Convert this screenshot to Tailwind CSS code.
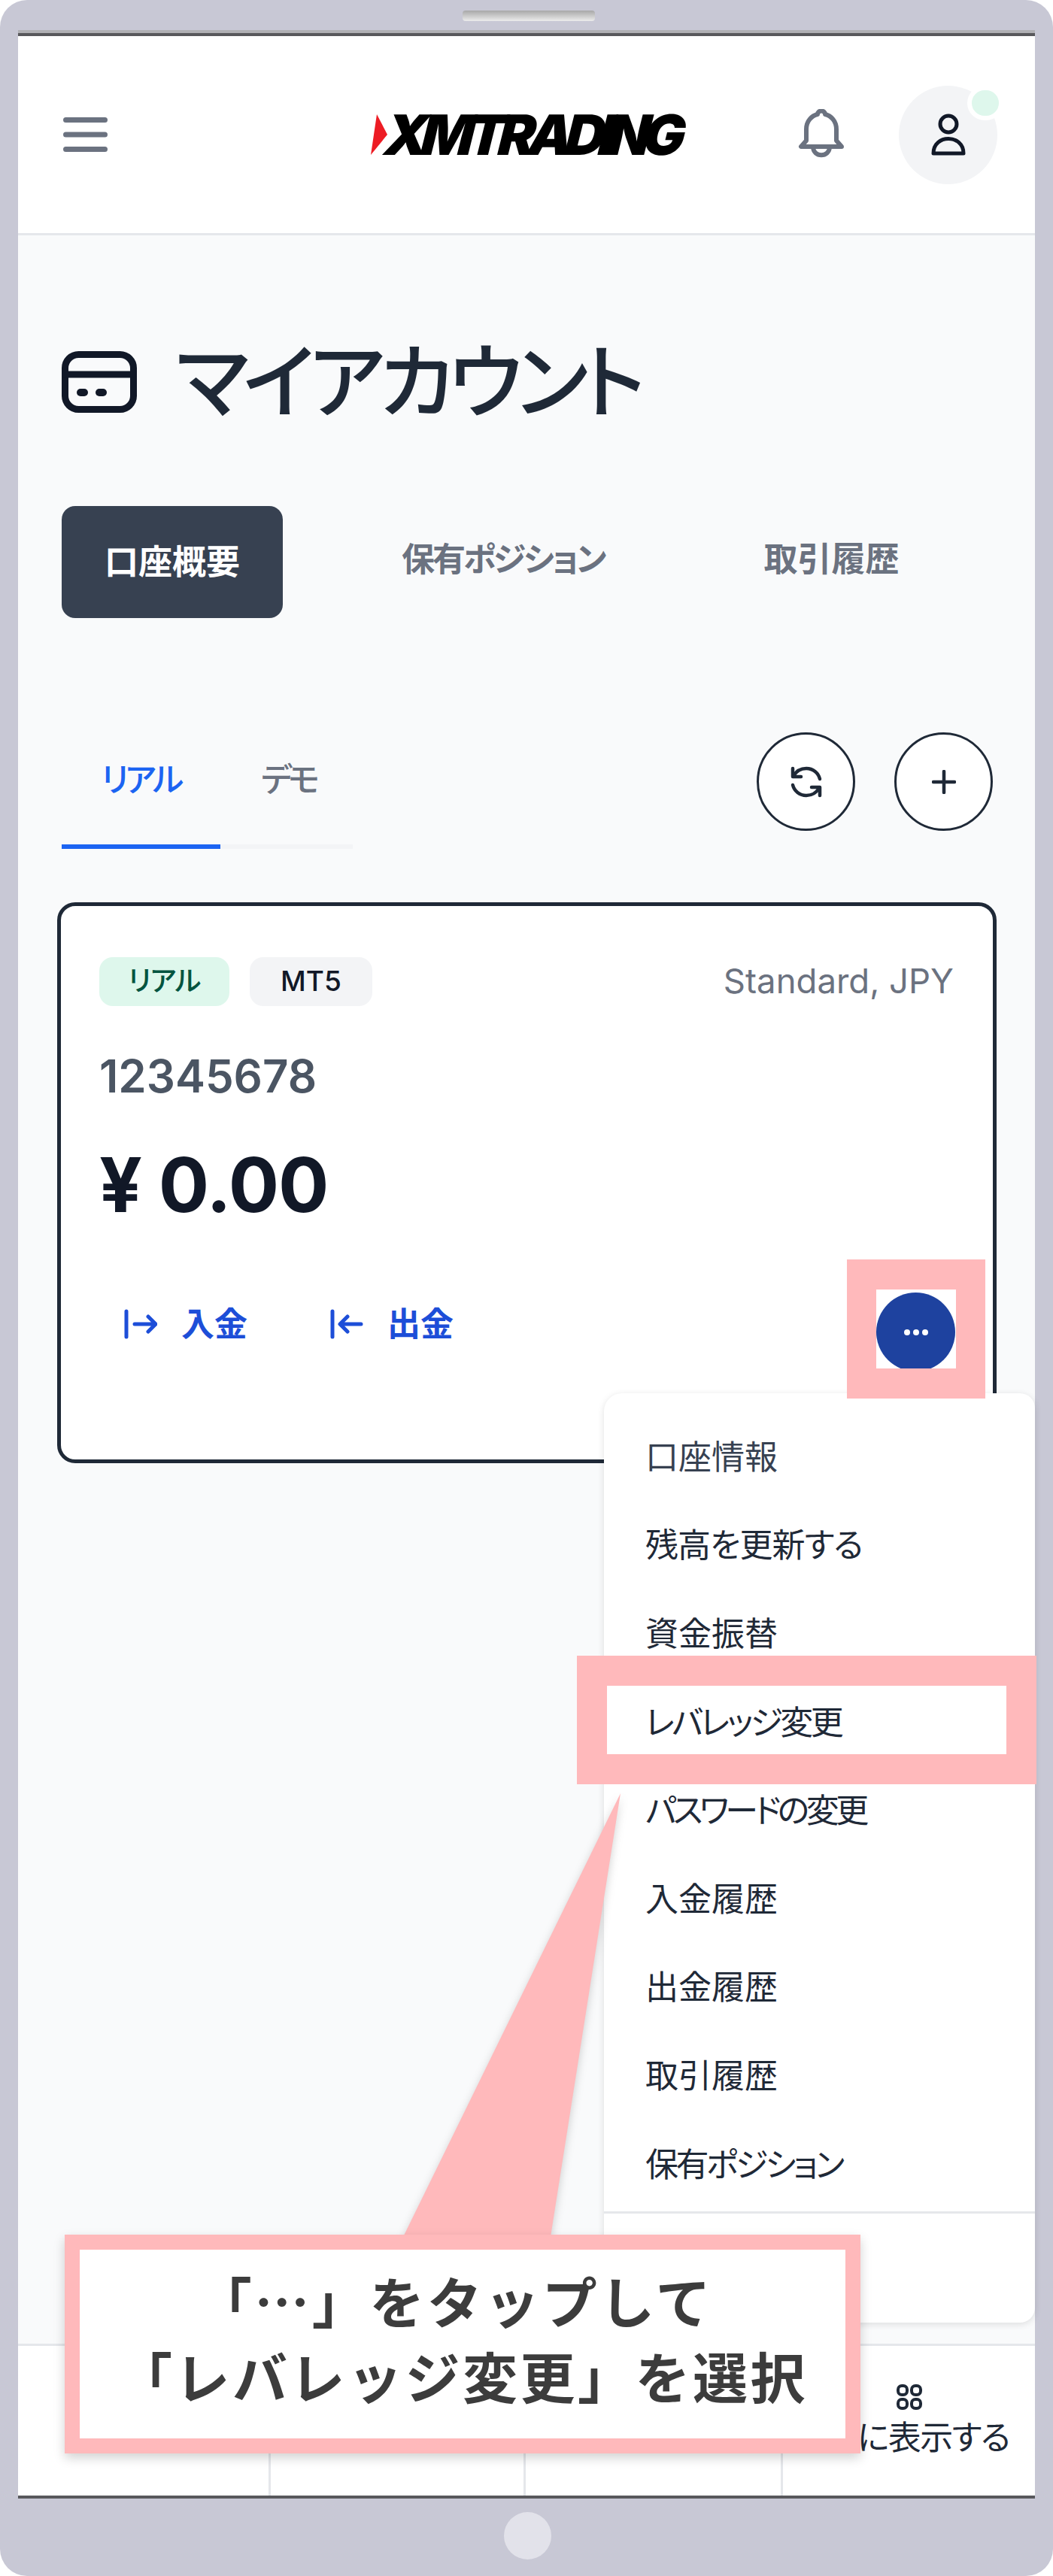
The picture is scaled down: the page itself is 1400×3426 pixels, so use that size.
<!DOCTYPE html>
<html lang="ja">
<head>
    <meta charset="UTF-8">
    <title>マイアカウント</title>
    <script src="https://cdn.jsdelivr.net/npm/@tailwindcss/browser@4"></script>
</head>
<body class="bg-white">
<div class="relative w-[1400px] h-[3426px] overflow-hidden rounded-[36px] bg-[#c8c8d5] flex flex-col px-[24px] pt-[40px] font-['Inter','Noto_Sans_CJK_JP',sans-serif] [font-feature-settings:'palt']">
    <!-- speaker -->
    <div class="absolute left-[615px] top-[14px] w-[176px] h-[14px] rounded-[4px] bg-gradient-to-b from-[#a8a8a8] to-[#ececec]"></div>

    <!-- screen -->
    <div class="relative h-[3283px] flex flex-col bg-[#f9fafb] border-t-4 border-[#b0b0b4]">
        <div class="h-[4px] bg-[#58585c]"></div>

        <!-- header -->
        <header class="h-[265px] shrink-0 bg-white border-b-[3px] border-[#e5e7eb] flex items-center pl-[60px] pr-[49px]">
            <svg width="59" height="46" viewBox="0 0 59 46" fill="none" stroke="#6b7280" stroke-width="7" stroke-linecap="round"><path d="M3.5 3.5h52M3.5 23h52M3.5 42.500h52"/></svg>
            <div class="ml-[350px] w-[417px] flex items-center">
                <svg width="26" height="54" viewBox="0 0 26 54" class="shrink-0"><path d="M8 0L22 27L0 54Z" fill="#ed1c24"/></svg>
                <span class="-ml-[6px] w-[400px] text-[74px] leading-[54px] font-black text-black tracking-[-9.500px] -skew-x-[14deg] whitespace-nowrap">XMTRADING</span>
            </div>
            <svg class="ml-[151px]" width="62" height="68" viewBox="0 0 62 68" fill="none" stroke="#6b7280" stroke-width="6" stroke-linecap="round" stroke-linejoin="round"><path d="M4 50h54l-7-8V27C51 16 44 9 36 7c0-6-10-6-10 0C18 9 11 16 11 27v15ZM20 50c0 15 22 15 22 0"/></svg>
            <div class="relative ml-[72px] w-[131px] h-[131px] rounded-full bg-[#f3f4f6] flex items-center justify-center">
                <svg width="46" height="56" viewBox="0 0 46 56" fill="none" stroke="#111827" stroke-width="5" stroke-linejoin="round"><circle cx="23" cy="14" r="11"/><path d="M3 53c0-26 40-26 40 0Z"/></svg>
                <div class="absolute right-[-8px] top-[0px] w-[48px] h-[46px] rounded-full bg-[#def7ec] border-[6px] border-white"></div>
            </div>
        </header>

        <main class="flex-1 px-[58px] flex flex-col">
            <!-- title -->
            <div class="mt-[138px] flex items-center h-[114px]">
                <svg width="100" height="82" viewBox="0 0 100 82" fill="none" stroke="#111827" stroke-width="9" stroke-linecap="round"><rect x="4.500" y="4.500" width="91" height="73" rx="18"/><path d="M4 31h92"/><rect x="20" y="50" width="15" height="10" rx="5" fill="#111827" stroke="none"/><rect x="45" y="50" width="15" height="10" rx="5" fill="#111827" stroke="none"/></svg>
                <h1 class="ml-[52px] text-[108px] leading-[114px] font-medium text-[#1f2937] tracking-[-7.500px]">マイアカウント</h1>
            </div>

            <!-- page tabs -->
            <nav class="mt-[108px] flex items-center h-[149px]">
                <div class="w-[294px] h-[149px] rounded-[18px] bg-[#374151] text-white text-[45px] font-semibold flex items-center justify-center">口座概要</div>
                <div class="ml-[158px] text-[44px] font-semibold text-[#6b7280] -translate-y-[4px] tracking-[-3px]">保有ポジション</div>
                <div class="ml-[212px] text-[45px] font-semibold text-[#6b7280] -translate-y-[4px]">取引履歴</div>
            </nav>

            <!-- real / demo -->
            <div class="mt-[152px] flex justify-between">
                <div class="w-[387px] mt-[23px]">
                    <div class="flex h-[132px] border-b-[6px] border-[#f3f4f6]">
                        <div class="w-[211px] h-[132px] border-b-[6px] border-[#1c64f2] text-[#1c64f2] text-[44px] font-medium text-center pt-[7px] tracking-[-4px]">リアル</div>
                        <div class="ml-[54px] text-[#6b7280] text-[44px] font-medium pt-[7px] tracking-[-5px]">デモ</div>
                    </div>
                </div>
                <div class="flex gap-[52px] mr-[-2px]">
                    <div class="w-[131px] h-[131px] rounded-full bg-white border-[3px] border-[#1f2937] flex items-center justify-center">
                        <svg width="44" height="42" viewBox="0 0 44 42" fill="none" stroke="#1f2937" stroke-width="4.500" stroke-linecap="round" stroke-linejoin="round"><path d="M4 3v11h11"/><path d="M5 13C9 6 15 3 22 3c9 0 16 6 18 14"/><path d="M40 39V28H29"/><path d="M39 29c-4 7-10 10-17 10-9 0-16-6-18-14"/></svg>
                    </div>
                    <div class="w-[131px] h-[131px] rounded-full bg-white border-[3px] border-[#1f2937] flex items-center justify-center">
                        <svg width="32" height="32" viewBox="0 0 32 32" fill="none" stroke="#1f2937" stroke-width="4.500" stroke-linecap="round"><path d="M16 2v28M2 16h28"/></svg>
                    </div>
                </div>
            </div>

            <!-- account card -->
            <section class="mt-[71px] -ml-[6px] -mr-[7px] h-[746px] rounded-[24px] border-[5px] border-[#1f2937] bg-white pl-[51px] pr-[52px] pt-[66px]">
                <div class="flex items-center justify-between">
                    <div class="flex gap-[27px]">
                        <span class="w-[173px] h-[65px] rounded-[18px] bg-[#def7ec] text-[#03543f] text-[37px] font-medium flex items-center justify-center tracking-[-1px]">リアル</span>
                        <span class="w-[163px] h-[65px] rounded-[18px] bg-[#f3f4f6] text-[#111827] text-[37px] font-medium flex items-center justify-center">MT5</span>
                    </div>
                    <span class="text-[45.500px] text-[#6b7280]">Standard, JPY</span>
                </div>
                <div class="mt-[57px] text-[60px] leading-[70px] font-semibold text-[#4b5563]">12345678</div>
                <div class="mt-[50px] text-[100px] leading-[120px] font-bold text-[#111827] tracking-[-1px]">¥ 0.00</div>
                <div class="mt-[72px] flex items-center justify-between">
                    <div class="flex items-center text-[#1d4ed8] text-[44px] font-semibold">
                        <svg class="ml-[33px]" width="44" height="40" viewBox="0 0 44 40" fill="none" stroke="currentColor" stroke-width="5" stroke-linecap="round" stroke-linejoin="round"><path d="M3 3v34M14 20h27M32 10l10 10-10 10"/></svg>
                        <span class="ml-[32px]">入金</span>
                        <svg class="ml-[110px]" width="44" height="40" viewBox="0 0 44 40" fill="none" stroke="currentColor" stroke-width="5" stroke-linecap="round" stroke-linejoin="round"><path d="M3 3v34M41 20H14M23 10L13 20l10 10"/></svg>
                        <span class="ml-[32px]">出金</span>
                    </div>
                    <div class="w-[105px] h-[105px] rounded-full bg-[#1e429f] flex items-center justify-center gap-[4px] mr-[-2px] translate-y-[11px]">
                        <i class="w-[8px] h-[8px] rounded-full bg-white"></i><i class="w-[8px] h-[8px] rounded-full bg-white"></i><i class="w-[8px] h-[8px] rounded-full bg-white"></i>
                    </div>
                </div>
            </section>
        </main>

        <!-- bottom tabs -->
        <footer class="h-[206px] shrink-0 bg-white border-t-[3px] border-[#e5e7eb] border-b-[4px] border-b-[#58585c] grid grid-cols-[336px_339px_342px_1fr] text-[#1f2937]">
            <div class="border-r-[3px] border-[#e5e7eb]"></div>
            <div class="border-r-[3px] border-[#e5e7eb]"></div>
            <div class="border-r-[3px] border-[#e5e7eb]"></div>
            <div class="flex flex-col items-end pr-[34px] pt-[50px]">
                <svg class="mr-[115px]" width="36" height="36" viewBox="0 0 36 36" fill="none" stroke="#1f2937" stroke-width="4"><rect x="3" y="3" width="12" height="12" rx="5"/><rect x="21" y="3" width="12" height="12" rx="5"/><rect x="3" y="21" width="12" height="12" rx="5"/><rect x="21" y="21" width="12" height="12" rx="5"/></svg>
                <span class="mt-[8px] text-[44px] leading-[56px] tracking-[-1.500px]">に表示する</span>
            </div>
        </footer>
    </div>

    <!-- bottom bezel -->
    <div class="flex-1 flex items-center justify-center">
        <div class="w-[63px] h-[63px] rounded-full bg-[#e2e2ea] -mt-[4px] ml-[2px]"></div>
    </div>

    <!-- account menu -->
    <div class="absolute left-[803px] top-[1853px] w-[573px] h-[1236px] rounded-[24px] rounded-r-[20px] bg-white shadow-[0_2px_10px_rgba(0,0,0,0.12)] text-[44px] text-[#1f2937]">
        <ul class="pl-[55px] pt-[26px]">
            <li class="h-[117.600px] flex items-center text-[#374151]">口座情報</li>
            <li class="h-[117.600px] flex items-center tracking-[-1px]">残高を更新する</li>
            <li class="h-[117.600px] flex items-center">資金振替</li>
            <li class="h-[117.600px] flex items-center tracking-[-3.500px]">レバレッジ変更</li>
            <li class="h-[117.600px] flex items-center tracking-[-4.500px]">パスワードの変更</li>
            <li class="h-[117.600px] flex items-center">入金履歴</li>
            <li class="h-[117.600px] flex items-center">出金履歴</li>
            <li class="h-[117.600px] flex items-center">取引履歴</li>
            <li class="h-[117.600px] flex items-center tracking-[-3.500px]">保有ポジション</li>
        </ul>
        <div class="mt-[4px] h-[3px] bg-[#e5e7eb]"></div>
    </div>

    <!-- annotation highlights -->
    <div class="absolute left-[1126px] top-[1675px] w-[184px] h-[185px] border-x-[39px] border-y-[40px] border-[#ffb9bb]"></div>
    <div class="absolute left-[767px] top-[2202px] w-[611px] h-[171px] border-x-[40px] border-y-[40px] border-[#ffb9bb]"></div>

    <!-- callout -->
    <svg class="absolute left-[500px] top-[2380px] drop-shadow-[0_4px_6px_rgba(0,0,0,0.18)]" width="360" height="600" viewBox="0 0 360 600"><path d="M325 5L232 595H36Z" fill="#ffb9bb"/></svg>
    <div class="absolute left-[86px] top-[2972px] w-[1058px] h-[291px] bg-white border-x-[20px] border-y-[20px] border-[#ffb9bb] shadow-[0_6px_14px_rgba(0,0,0,0.18)] flex flex-col items-center justify-center pb-[20px] text-[#3c3c3c] text-[73px] leading-[100px] font-bold tracking-[3.500px] font-['Noto_Sans_CJK_JP',sans-serif] [font-feature-settings:normal]">
        <p class="pr-[20px]">「…」をタップして</p>
        <p>「レバレッジ変更」を選択</p>
    </div>
</div>
</body>
</html>
